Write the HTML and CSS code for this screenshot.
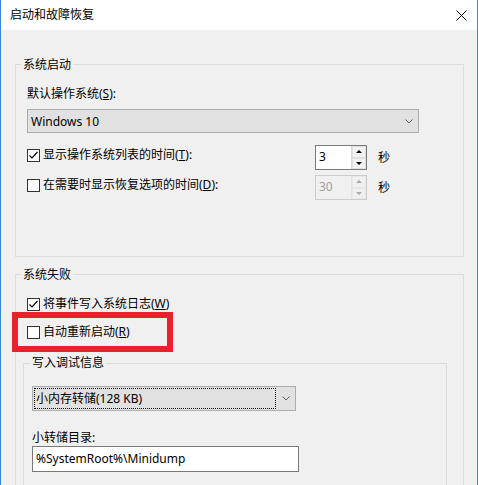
FILE: index.html
```html
<!DOCTYPE html>
<html lang="zh-CN">
<head>
<meta charset="utf-8">
<title>启动和故障恢复</title>
<link rel="stylesheet" href="styles.css">
</head>
<body>
<div class="window">
  <div class="titlebar">
    <span class="title">启动和故障恢复</span>
    <svg class="close" width="11" height="11" viewBox="0 0 11 11"><path d="M0.5 0.5 L10.5 10.5 M10.5 0.5 L0.5 10.5" stroke="#000" stroke-width="1" fill="none"/></svg>
  </div>
  <div class="content">
    <div class="group g1">
      <div class="legend">系统启动</div>
      <div class="label l-os">默认操作系统(<u>S</u>):</div>
      <div class="combo c-os">
        <span>Windows 10</span>
        <svg class="chev" width="8" height="5" viewBox="0 0 8 5"><path d="M0.5 0.5 L4 4 L7.5 0.5" stroke="#606060" stroke-width="1" fill="none"/></svg>
      </div>
      <div class="row r1">
        <div class="check">
          <span class="box"><svg width="11" height="11" viewBox="0 0 11 11"><path d="M1.5 5.5 L4 8 L9.5 2" stroke="#000" stroke-width="1.2" fill="none"/></svg></span>
          <span>显示操作系统列表的时间(<u>T</u>):</span>
        </div>
        <div class="spin">
          <span class="spin-val">3</span>
          <span class="spin-btns"><span class="sbtn"><i class="tri-up"></i></span><span class="sbtn"><i class="tri-down"></i></span></span>
        </div>
        <span class="unit">秒</span>
      </div>
      <div class="row r2">
        <div class="check">
          <span class="box"></span>
          <span>在需要时显示恢复选项的时间(<u>D</u>):</span>
        </div>
        <div class="spin disabled">
          <span class="spin-val">30</span>
          <span class="spin-btns"><span class="sbtn"><i class="tri-up"></i></span><span class="sbtn"><i class="tri-down"></i></span></span>
        </div>
        <span class="unit">秒</span>
      </div>
    </div>
    <div class="group g2">
      <div class="legend">系统失败</div>
      <div class="line r-w">
        <div class="check">
          <span class="box"><svg width="11" height="11" viewBox="0 0 11 11"><path d="M1.5 5.5 L4 8 L9.5 2" stroke="#000" stroke-width="1.2" fill="none"/></svg></span>
          <span>将事件写入系统日志(<u>W</u>)</span>
        </div>
      </div>
      <div class="line r-r">
        <div class="check">
          <span class="box"></span>
          <span>自动重新启动(<u>R</u>)</span>
        </div>
        <div class="redbox"></div>
      </div>
      <div class="sub">
        <div class="legend">写入调试信息</div>
        <div class="combo c-dump">
          <span class="focus">小内存转储(128 KB)</span>
          <span class="arrow"><svg class="chev" width="8" height="5" viewBox="0 0 8 5"><path d="M0.5 0.5 L4 4 L7.5 0.5" stroke="#606060" stroke-width="1" fill="none"/></svg></span>
        </div>
        <div class="label l-dir">小转储目录:</div>
        <div class="textbox">%SystemRoot%\Minidump</div>
      </div>
    </div>
  </div>
</div>
</body>
</html>
```
FILE: styles.css
```css
html, body {
  margin: 0;
  padding: 0;
  background: #f0f0f0;
}
body {
  font-family: "Noto Sans", "Noto Sans CJK SC", sans-serif;
  font-size: 12px;
  color: #000;
}
u {
  text-decoration: underline;
  text-underline-offset: 1px;
}
.window {
  width: 478px;
  height: 485px;
  box-sizing: border-box;
  border-left: 1px solid #3a87d8;
  border-right: 1px solid #3a87d8;
  background: #f0f0f0;
  overflow: hidden;
}
.titlebar {
  height: 30px;
  background: #fff;
  display: flex;
  align-items: center;
  justify-content: space-between;
  padding: 0 10px 0 9px;
}
.title {
  line-height: 16px;
}
.close {
  display: block;
}
.content {
  padding: 34px 13px 0 14px;
}
.group {
  border: 1px solid #dcdcdc;
  padding: 0 0 0 11px;
}
.g1 {
  padding-bottom: 56px;
}
.g2 {
  margin-top: 17px;
}
.legend {
  width: fit-content;
  margin: -8px 0 0 -6px;
  padding: 0 2px;
  background: #f0f0f0;
  line-height: 16px;
  height: 16px;
}
.label {
  line-height: 16px;
}
.l-os {
  margin-top: 13px;
}
.combo {
  box-sizing: border-box;
  border: 1px solid #adadad;
  background: #e1e1e1;
  display: flex;
  align-items: center;
}
.c-os {
  margin-top: 7px;
  width: 392px;
  height: 24px;
  justify-content: space-between;
  padding: 0 5px 0 3px;
}
.chev {
  display: block;
}
.row {
  display: flex;
  align-items: flex-start;
  height: 25px;
}
.r1 {
  margin-top: 12px;
}
.r2 {
  margin-top: 5px;
}
.check {
  display: flex;
  align-items: center;
  gap: 3px;
  height: 16px;
  line-height: 16px;
  margin-top: 1px;
}
.row .check {
  width: 288px;
  margin-top: 2px;
}
.box {
  width: 13px;
  height: 13px;
  box-sizing: border-box;
  border: 1px solid #333;
  background: #fff;
  display: flex;
  align-items: center;
  justify-content: center;
  flex: none;
}
.box svg {
  display: block;
}
.spin {
  width: 52px;
  height: 25px;
  box-sizing: border-box;
  border: 1px solid #7a7a7a;
  background: #fff;
  display: flex;
}
.spin-val {
  flex: 1;
  padding-left: 3px;
  line-height: 22px;
}
.spin-btns {
  width: 14px;
  display: flex;
  flex-direction: column;
  border-left: 1px solid #d9d9d9;
  background: #f2f2f2;
}
.sbtn {
  flex: 1;
  display: flex;
  align-items: center;
  justify-content: center;
  border: 1px solid #e0e0e0;
}
.tri-up {
  width: 0;
  height: 0;
  border-left: 3px solid transparent;
  border-right: 3px solid transparent;
  border-bottom: 3px solid #000;
}
.tri-down {
  width: 0;
  height: 0;
  border-left: 3px solid transparent;
  border-right: 3px solid transparent;
  border-top: 3px solid #000;
}
.spin.disabled {
  border-color: #cccccc;
  background: #f0f0f0;
  color: #a0a0a0;
}
.spin.disabled .spin-btns {
  border-left-color: #e3e3e3;
  background: #f0f0f0;
}
.spin.disabled .sbtn {
  border-color: #e8e8e8;
}
.spin.disabled .tri-up {
  border-bottom-color: #a8a8a8;
}
.spin.disabled .tri-down {
  border-top-color: #a8a8a8;
}
.unit {
  margin-left: 11px;
  line-height: 25px;
}
.line {
  height: 16px;
}
.line .check {
  margin-top: 0;
}
.r-w {
  margin-top: 13px;
}
.r-r {
  margin-top: 12px;
  position: relative;
}
.redbox {
  position: absolute;
  left: -15px;
  top: -12px;
  width: 161px;
  height: 40px;
  box-sizing: border-box;
  border: 6px solid #e8222a;
}
.sub {
  margin: 23px 16px 0 -4px;
  border: 1px solid #dcdcdc;
  padding: 0 0 40px 8px;
}
.sub .legend {
  margin: -9px 0 0 -2px;
}
.c-dump {
  margin-top: 15px;
  width: 264px;
  height: 25px;
  align-items: stretch;
}
.focus {
  flex: 1;
  margin: 1px 0 1px 1px;
  border: 1px dotted #000;
  padding-left: 1px;
  line-height: 19px;
}
.arrow {
  width: 19px;
  display: flex;
  align-items: center;
  justify-content: center;
}
.l-dir {
  margin-top: 19px;
}
.textbox {
  width: 267px;
  height: 26px;
  box-sizing: border-box;
  border: 1px solid #7a7a7a;
  background: #fff;
  padding-left: 3px;
  line-height: 24px;
}
```
